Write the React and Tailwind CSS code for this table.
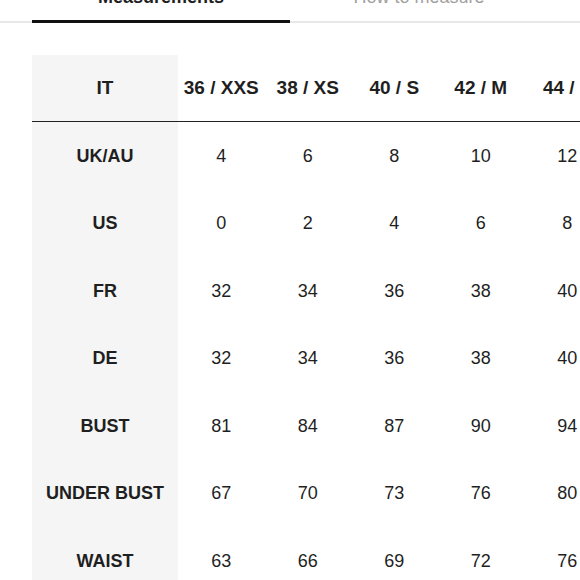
import React from "react";

const sizes = ["36 / XXS", "38 / XS", "40 / S", "42 / M", "44 / L", "46 / XL"];

const rows = [
  ["UK/AU", [4, 6, 8, 10, 12, 14]],
  ["US", [0, 2, 4, 6, 8, 10]],
  ["FR", [32, 34, 36, 38, 40, 42]],
  ["DE", [32, 34, 36, 38, 40, 42]],
  ["BUST", [81, 84, 87, 90, 94, 98]],
  ["UNDER BUST", [67, 70, 73, 76, 80, 84]],
  ["WAIST", [63, 66, 69, 72, 76, 80]],
];

const App = () => {
  return (
    <div
      className="w-[580px] h-[580px] overflow-hidden bg-white text-[#1f1f1f]"
      style={{ fontFamily: '"Liberation Sans", Arial, sans-serif' }}
    >
      {/* Tabs */}
      <div className="border-b-2 border-[#e8e8e8] mt-[-13px]">
        <div className="flex ml-8">
          <div className="w-[258px] text-center text-[18px] leading-[20px] font-bold pb-[13px] border-b-[3px] border-[#111] -mb-[2px]">
            Measurements
          </div>
          <div className="w-[258px] text-center text-[18px] leading-[20px] text-[#a0a0a0] pb-[13px]">
            How to measure
          </div>
        </div>
      </div>

      {/* Size table */}
      <div className="mt-[32px] ml-8">
        <div className="flex h-[67px] items-center border-b border-[#222] w-max">
          <div className="w-[146px] h-full bg-[#f5f5f5] flex items-center justify-center text-[19px] font-bold">
            IT
          </div>
          {sizes.map((s) => (
            <div
              key={s}
              className="w-[86.5px] text-center text-[19px] font-bold whitespace-nowrap"
            >
              {s}
            </div>
          ))}
        </div>
        {rows.map(([label, vals]) => (
          <div key={label} className="flex h-[67.5px] items-center w-max">
            <div className="w-[146px] h-full bg-[#f5f5f5] flex items-center justify-center text-[18px] font-bold whitespace-nowrap pt-px">
              {label}
            </div>
            {vals.map((v, i) => (
              <div key={i} className="w-[86.5px] text-center text-[18px] pt-px">
                {v}
              </div>
            ))}
          </div>
        ))}
      </div>
    </div>
  );
};

export default App;
